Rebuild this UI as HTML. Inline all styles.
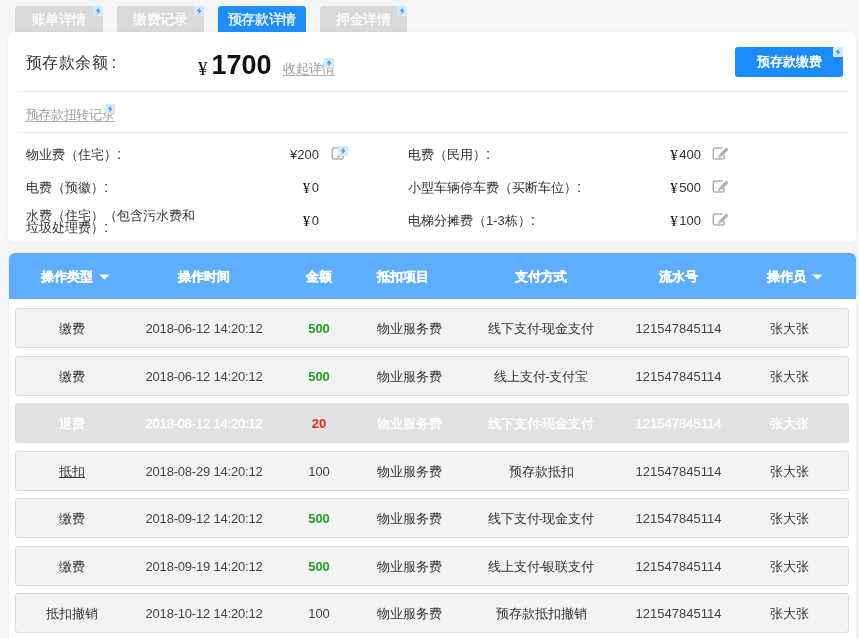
<!DOCTYPE html>
<html><head><meta charset="utf-8">
<style>
*{margin:0;padding:0;box-sizing:border-box}
#w{position:absolute;left:0;top:0;width:859px;height:638px;will-change:transform}
html,body{width:859px;height:638px;overflow:hidden;background:#f4f5f7;font-family:"Liberation Sans",sans-serif;color:#333;font-size:13px}
.a{position:absolute;white-space:nowrap;line-height:1}
.tab{position:absolute;top:6px;height:26px;width:87.5px;background:#d9d9d9;color:#fff;-webkit-text-stroke:0.25px #fff;border-radius:3px 3px 0 0;text-align:center;font-size:13.6px;letter-spacing:-0.45px;line-height:27px}
.tab.on{background:#1e8ffa}
.bd{position:absolute;width:10px;height:10px;background:#d6e9fb;border-radius:1px}
.bd svg{position:absolute;left:2px;top:1px}
.panel{position:absolute;left:8px;top:32px;width:848px;height:209.5px;background:#fff;border-radius:6px;box-shadow:0 0 4px rgba(0,0,0,.04)}
.hr{position:absolute;height:1px;background:#e8e8e8}
.lnk{color:#9c9c9c;text-decoration:underline;text-decoration-color:#b0b0b0;text-underline-offset:1.5px}
.btn{position:absolute;left:735px;top:47px;width:108px;height:29.5px;background:#1b8cfa;border-radius:3px;color:#fff;font-weight:bold;font-size:13px;line-height:29px;text-align:center}
.edit{position:absolute;width:14px;height:13px}
.thead{position:absolute;left:8.5px;top:252.5px;width:847.5px;height:46px;background:#5daeff;border-radius:6px 6px 0 0;box-shadow:0 0 4px rgba(0,0,0,.05)}
.th{position:absolute;top:269.8px;color:#fff;font-weight:bold;-webkit-text-stroke:0.25px #fff;font-size:13px;line-height:13px;transform:translateX(-50%)}
.tbody{position:absolute;left:8.5px;top:298.5px;width:847.5px;height:345px;background:#fff;box-shadow:0 2px 4px rgba(0,0,0,.05)}
.row{position:absolute;left:15px;width:834px;height:40px;background:#f3f3f3;border:1px solid #dadada;border-radius:3px}
.row.dis{background:#e1e1e1}
.td{position:absolute;top:13px;font-size:13px;line-height:13px;color:#333;transform:translateX(-50%)}
.dis .td{color:#fff;-webkit-text-stroke:0.3px #fff}
.dis .td.r{-webkit-text-stroke:0}
.dt{letter-spacing:-0.2px;color:#444}
.dg{color:#444}
.hy{margin:0 -0.7px}
.co{font-size:15px;line-height:0}
.y{font-family:'Liberation Serif',serif;font-size:15px;line-height:0;margin-right:1.5px;color:#111;position:relative;top:1px}
.g{color:#22a022!important;font-weight:bold}
.r{color:#e02a2a!important;font-weight:bold}
</style></head><body><div id="w">

<div class="tab" style="left:15px">账单详情</div>
<div class="tab" style="left:116.5px">缴费记录</div>
<div class="tab on" style="left:218px">预存款详情</div>
<div class="tab" style="left:319.5px">押金详情</div>

<div class="panel"></div>
<div class="bd" style="left:93px;top:6px"><svg width="10" height="10" viewBox="0 0 10 10" style="left:0;top:0"><path d="M6.3 1.6 L2.6 5.3 H4.9 L3.9 8.5 L7.6 4.6 H5.3 Z" fill="#1a8cff"/></svg></div><div class="bd" style="left:194px;top:6px"><svg width="10" height="10" viewBox="0 0 10 10" style="left:0;top:0"><path d="M6.3 1.6 L2.6 5.3 H4.9 L3.9 8.5 L7.6 4.6 H5.3 Z" fill="#1a8cff"/></svg></div><div class="bd" style="left:397px;top:6px"><svg width="10" height="10" viewBox="0 0 10 10" style="left:0;top:0"><path d="M6.3 1.6 L2.6 5.3 H4.9 L3.9 8.5 L7.6 4.6 H5.3 Z" fill="#1a8cff"/></svg></div>
<div class="a" style="left:26px;top:54px;font-size:16px;letter-spacing:0.4px">预存款余额<span style="margin-left:3.5px;font-size:17px">:</span></div>
<div class="a" style="left:198px;top:59px;font-size:19px;font-family:'Liberation Serif',serif;color:#111">¥</div>
<div class="a" style="left:211.5px;top:52px;font-size:27px;font-weight:bold;color:#111">1700</div>
<div class="a lnk" style="left:283px;top:61.5px;font-size:13px">收起详情</div>
<div class="bd" style="left:324px;top:58px"><svg width="10" height="10" viewBox="0 0 10 10" style="left:0;top:0"><path d="M6.3 1.6 L2.6 5.3 H4.9 L3.9 8.5 L7.6 4.6 H5.3 Z" fill="#1a8cff"/></svg></div><div class="btn">预存款缴费</div><div class="bd" style="left:833px;top:47px"><svg width="10" height="10" viewBox="0 0 10 10" style="left:0;top:0"><path d="M6.3 1.6 L2.6 5.3 H4.9 L3.9 8.5 L7.6 4.6 H5.3 Z" fill="#1a8cff"/></svg></div><div class="hr" style="left:17px;top:91px;width:831px"></div><div class="a lnk" style="left:25.5px;top:108px;font-size:13px;letter-spacing:-0.3px">预存款扭转记录</div><div class="bd" style="left:105px;top:104px"><svg width="10" height="10" viewBox="0 0 10 10" style="left:0;top:0"><path d="M6.3 1.6 L2.6 5.3 H4.9 L3.9 8.5 L7.6 4.6 H5.3 Z" fill="#1a8cff"/></svg></div><div class="hr" style="left:17px;top:132px;width:831px"></div>
<div class="a" style="left:26px;top:148px">物业费（住宅）<span class="co">:</span></div>
<div class="a" style="left:26px;top:181px">电费（预徽）<span class="co">:</span></div>
<div class="a" style="left:26px;top:209.5px;line-height:12px;white-space:normal;width:175px">水费（住宅）（包含污水费和垃圾处理费）<span class="co">:</span></div>
<div class="a" style="right:540px;top:148px">¥200</div>
<div class="a" style="right:540px;top:181px"><span class="y">¥</span>0</div>
<div class="a" style="right:540px;top:214px"><span class="y">¥</span>0</div>
<div class="a" style="left:408px;top:148px">电费（民用）<span class="co">:</span></div>
<div class="a" style="left:408px;top:181px">小型车辆停车费（买断车位）<span class="co">:</span></div>
<div class="a" style="left:408px;top:214px">电梯分摊费（1-3栋）<span class="co">:</span></div>
<div class="a" style="right:158px;top:148px"><span class="y">¥</span>400</div>
<div class="a" style="right:158px;top:181px"><span class="y">¥</span>500</div>
<div class="a" style="right:158px;top:214px"><span class="y">¥</span>100</div>
<svg class="edit" style="left:331px;top:146px;width:17px;height:15px" viewBox="0 0 17 15"><path d="M10.8 2 H3 Q1.25 2 1.25 3.75 V11.25 Q1.25 13 3 13 H10.45 Q12.2 13 12.2 11.25 V9" fill="none" stroke="#b0b0b0" stroke-width="1.5"/><path d="M6 12 L6.9 8.7 L14.4 1.5 L16.7 3.8 L9.3 11.1 Z" fill="#b0b0b0"/><path d="M7.4 9 L9.1 10.7" stroke="#fff" stroke-width="0.7"/></svg><div class="bd" style="left:338px;top:146px"><svg width="10" height="10" viewBox="0 0 10 10" style="left:0;top:0"><path d="M6.3 1.6 L2.6 5.3 H4.9 L3.9 8.5 L7.6 4.6 H5.3 Z" fill="#1a8cff"/></svg></div><svg class="edit" style="left:712px;top:146px;width:17px;height:15px" viewBox="0 0 17 15"><path d="M10.8 2 H3 Q1.25 2 1.25 3.75 V11.25 Q1.25 13 3 13 H10.45 Q12.2 13 12.2 11.25 V9" fill="none" stroke="#b0b0b0" stroke-width="1.5"/><path d="M6 12 L6.9 8.7 L14.4 1.5 L16.7 3.8 L9.3 11.1 Z" fill="#b0b0b0"/><path d="M7.4 9 L9.1 10.7" stroke="#fff" stroke-width="0.7"/></svg><svg class="edit" style="left:712px;top:179px;width:17px;height:15px" viewBox="0 0 17 15"><path d="M10.8 2 H3 Q1.25 2 1.25 3.75 V11.25 Q1.25 13 3 13 H10.45 Q12.2 13 12.2 11.25 V9" fill="none" stroke="#b0b0b0" stroke-width="1.5"/><path d="M6 12 L6.9 8.7 L14.4 1.5 L16.7 3.8 L9.3 11.1 Z" fill="#b0b0b0"/><path d="M7.4 9 L9.1 10.7" stroke="#fff" stroke-width="0.7"/></svg><svg class="edit" style="left:712px;top:212px;width:17px;height:15px" viewBox="0 0 17 15"><path d="M10.8 2 H3 Q1.25 2 1.25 3.75 V11.25 Q1.25 13 3 13 H10.45 Q12.2 13 12.2 11.25 V9" fill="none" stroke="#b0b0b0" stroke-width="1.5"/><path d="M6 12 L6.9 8.7 L14.4 1.5 L16.7 3.8 L9.3 11.1 Z" fill="#b0b0b0"/><path d="M7.4 9 L9.1 10.7" stroke="#fff" stroke-width="0.7"/></svg><div class="thead"></div><div class="tbody"></div><div class="th" style="left:66.5px">操作类型</div><div class="th" style="left:204px">操作时间</div><div class="th" style="left:319px">金额</div><div class="th" style="left:403px">抵扣项目</div><div class="th" style="left:541px">支付方式</div><div class="th" style="left:678px">流水号</div><div class="th" style="left:786px">操作员</div><svg class="a" style="left:98.5px;top:273.5px" width="11" height="7" viewBox="0 0 11 7"><path d="M0.2 0.4 H10.6 L5.4 5.6 Z" fill="#fff"/></svg><svg class="a" style="left:811.8px;top:273.5px" width="11" height="7" viewBox="0 0 11 7"><path d="M0.2 0.4 H10.6 L5.4 5.6 Z" fill="#fff"/></svg><div class="row " style="top:308.0px"><div class="td " style="left:56px">缴费</div><div class="td dt" style="left:188px">2018-06-12 14:20:12</div><div class="td g" style="left:303px">500</div><div class="td " style="left:393.5px">物业服务费</div><div class="td " style="left:525px">线下支付<span class="hy">-</span>现金支付</div><div class="td dg" style="left:662.5px">121547845114</div><div class="td " style="left:773px">张大张</div></div><div class="row " style="top:355.5px"><div class="td " style="left:56px">缴费</div><div class="td dt" style="left:188px">2018-06-12 14:20:12</div><div class="td g" style="left:303px">500</div><div class="td " style="left:393.5px">物业服务费</div><div class="td " style="left:525px">线上支付<span class="hy">-</span>支付宝</div><div class="td dg" style="left:662.5px">121547845114</div><div class="td " style="left:773px">张大张</div></div><div class="row dis" style="top:403.0px"><div class="td " style="left:56px">退费</div><div class="td dt" style="left:188px">2018-08-12 14:20:12</div><div class="td r" style="left:303px">20</div><div class="td " style="left:393.5px">物业服务费</div><div class="td " style="left:525px">线下支付<span class="hy">-</span>现金支付</div><div class="td dg" style="left:662.5px">121547845114</div><div class="td " style="left:773px">张大张</div></div><div class="row " style="top:450.5px"><div class="td " style="left:56px"><u>抵扣</u></div><div class="td dt" style="left:188px">2018-08-29 14:20:12</div><div class="td dg" style="left:303px">100</div><div class="td " style="left:393.5px">物业服务费</div><div class="td " style="left:525px">预存款抵扣</div><div class="td dg" style="left:662.5px">121547845114</div><div class="td " style="left:773px">张大张</div></div><div class="row " style="top:498.0px"><div class="td " style="left:56px">缴费</div><div class="td dt" style="left:188px">2018-09-12 14:20:12</div><div class="td g" style="left:303px">500</div><div class="td " style="left:393.5px">物业服务费</div><div class="td " style="left:525px">线下支付<span class="hy">-</span>现金支付</div><div class="td dg" style="left:662.5px">121547845114</div><div class="td " style="left:773px">张大张</div></div><div class="row " style="top:545.5px"><div class="td " style="left:56px">缴费</div><div class="td dt" style="left:188px">2018-09-19 14:20:12</div><div class="td g" style="left:303px">500</div><div class="td " style="left:393.5px">物业服务费</div><div class="td " style="left:525px">线上支付<span class="hy">-</span>银联支付</div><div class="td dg" style="left:662.5px">121547845114</div><div class="td " style="left:773px">张大张</div></div><div class="row " style="top:593.0px"><div class="td " style="left:56px">抵扣撤销</div><div class="td dt" style="left:188px">2018-10-12 14:20:12</div><div class="td dg" style="left:303px">100</div><div class="td " style="left:393.5px">物业服务费</div><div class="td " style="left:525px">预存款抵扣撤销</div><div class="td dg" style="left:662.5px">121547845114</div><div class="td " style="left:773px">张大张</div></div>

</div></body></html>
